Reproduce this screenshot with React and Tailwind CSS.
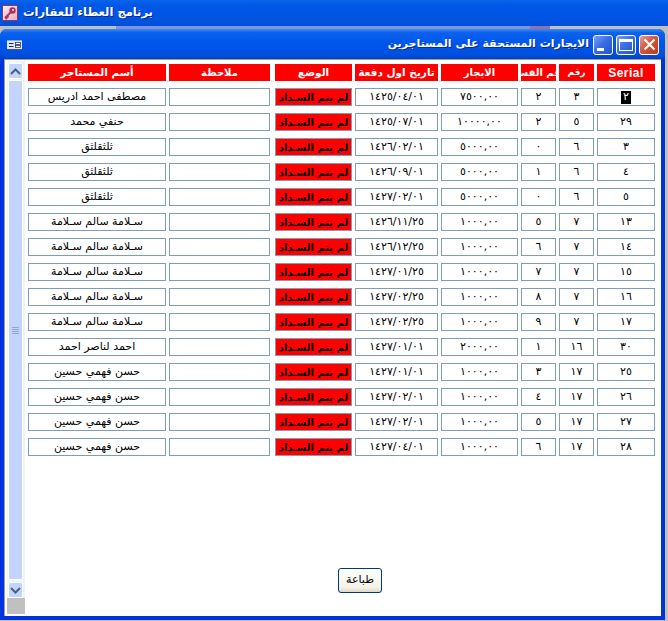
const FONT = "font-['Tahoma','DejaVu_Sans',sans-serif]";

const rows = [
  ["٢", "٣", "٢", "٧٥٠٠,٠٠", "١٤٢٥/٠٤/٠١", "مصطفى احمد ادريس"],
  ["٢٩", "٥", "٢", "١٠٠٠٠,٠٠", "١٤٢٥/٠٧/٠١", "حنفي محمد"],
  ["٣", "٦", "٠", "٥٠٠٠,٠٠", "١٤٢٦/٠٢/٠١", "ثلثقلثق"],
  ["٤", "٦", "١", "٥٠٠٠,٠٠", "١٤٢٦/٠٩/٠١", "ثلثقلثق"],
  ["٥", "٦", "٠", "٥٠٠٠,٠٠", "١٤٢٧/٠٢/٠١", "ثلثقلثق"],
  ["١٣", "٧", "٥", "١٠٠٠,٠٠", "١٤٢٦/١١/٢٥", "سـلامة سالم سـلامة"],
  ["١٤", "٧", "٦", "١٠٠٠,٠٠", "١٤٢٦/١٢/٢٥", "سـلامة سالم سـلامة"],
  ["١٥", "٧", "٧", "١٠٠٠,٠٠", "١٤٢٧/٠١/٢٥", "سـلامة سالم سـلامة"],
  ["١٦", "٧", "٨", "١٠٠٠,٠٠", "١٤٢٧/٠٢/٢٥", "سـلامة سالم سـلامة"],
  ["١٧", "٧", "٩", "١٠٠٠,٠٠", "١٤٢٧/٠٢/٢٥", "سـلامة سالم سـلامة"],
  ["٣٠", "١٦", "١", "٢٠٠٠,٠٠", "١٤٢٧/٠١/٠١", "احمد لناصر احمد"],
  ["٢٥", "١٧", "٣", "١٠٠٠,٠٠", "١٤٢٧/٠١/٠١", "حسن فهمي حسين"],
  ["٢٦", "١٧", "٤", "١٠٠٠,٠٠", "١٤٢٧/٠٢/٠١", "حسن فهمي حسين"],
  ["٢٧", "١٧", "٥", "١٠٠٠,٠٠", "١٤٢٧/٠٢/٠١", "حسن فهمي حسين"],
  ["٢٨", "١٧", "٦", "١٠٠٠,٠٠", "١٤٢٧/٠٤/٠١", "حسن فهمي حسين"],
];

const cellBase = "flex items-center justify-center overflow-hidden whitespace-nowrap";
const headBase = cellBase + " h-[17px] bg-[#ff0000] text-white font-bold";
const boxBase = cellBase + " h-[18px] border border-[#7f9db9] text-black";

function Header() {
  return (
    <div className="flex">
      <div className={headBase + " w-[138px] text-[10.5px]"}>أسم المستاجر</div>
      <div className={headBase + " w-[101px] ml-[3px] text-[10px]"}>ملاحظة</div>
      <div className={headBase + " w-[77px] ml-[5px] text-[10.5px]"}>الوضع</div>
      <div className={headBase + " w-[83px] ml-[3px] text-[10.5px]"}>تاريخ اول دفعة</div>
      <div className={headBase + " w-[77px] ml-[3px] text-[10px]"}>الايجار</div>
      <div className={headBase + " w-[35px] ml-[3px] text-[10px]"}>رقم القسم</div>
      <div className={headBase + " w-[35px] ml-[3px] text-[9px]"}>رقم</div>
      <div className={headBase + " w-[58px] ml-[3px] text-[12px] tracking-[0.5px] font-['Liberation_Sans',sans-serif]"}>Serial</div>
    </div>
  );
}

function Row({ r, first }) {
  return (
    <div className="flex items-start text-[11px]">
      <div className={boxBase + " w-[138px] bg-white"}>{r[5]}</div>
      <div className={boxBase + " w-[101px] ml-[3px] bg-white"}></div>
      <div className={boxBase + " w-[77px] ml-[5px] bg-[#ff0000] font-bold text-[10px]"}>لم يتم السـداد</div>
      <div className={boxBase + " w-[83px] ml-[3px] bg-white"}>{r[4]}</div>
      <div className={boxBase + " w-[77px] ml-[3px] bg-white"}>{r[3]}</div>
      <div className={boxBase + " w-[35px] ml-[3px] bg-white"}>{r[2]}</div>
      <div className={boxBase + " w-[35px] ml-[3px] bg-white"}>{r[1]}</div>
      <div className={boxBase + " w-[58px] ml-[3px] h-[17px] bg-white"}>
        {first ? (
          <span className="flex h-[13px] w-[10px] items-center justify-center bg-black text-white">{r[0]}</span>
        ) : (
          r[0]
        )}
      </div>
    </div>
  );
}

function WinBtn({ kind }) {
  const bg =
    kind === "close"
      ? "bg-[linear-gradient(135deg,#e8a08a,#d9553a_45%,#b83a1c)]"
      : "bg-[linear-gradient(135deg,#7d9ff0,#3a6ee6_45%,#2350d0)]";
  return (
    <div className={"flex h-[20px] w-[20px] items-center justify-center rounded-[3px] border border-white " + bg}>
      {kind === "close" && (
        <svg width="13" height="13" viewBox="0 0 13 13">
          <path d="M1.5 1.5L11.5 11.5M11.5 1.5L1.5 11.5" stroke="#fff" strokeWidth="2.2" />
        </svg>
      )}
      {kind === "max" && <div className="h-[12px] w-[14px] border border-t-[3px] border-white" />}
      {kind === "min" && <div className="mt-[10px] mr-[5px] h-[3px] w-[7px] bg-white" />}
    </div>
  );
}

function KeyIcon() {
  return (
    <div className="flex h-[16px] w-[16px] items-center justify-center border border-[#8a3a60] bg-[linear-gradient(135deg,#fbe8ee,#e8b0c0)]">
      <svg width="14" height="14" viewBox="0 0 14 14">
        <circle cx="9.5" cy="4.5" r="3.2" fill="#a8325f" />
        <path d="M7.5 6.5L2 12M2.5 11.5L4 13M4 10L5.5 11.5" stroke="#a8325f" strokeWidth="1.8" fill="none" />
        <circle cx="10" cy="4" r="1" fill="#f6d5df" />
      </svg>
    </div>
  );
}

function FormIcon() {
  return (
    <svg width="15" height="10" viewBox="0 0 15 10" className="mt-[2px]">
      <rect x="0" y="0" width="15" height="10" fill="#dfe4ee" />
      <rect x="0" y="0" width="15" height="1" fill="#8fa6d8" />
      <path d="M2 3.5H6.5M2 6.5H6.5" stroke="#1c2a50" strokeWidth="1" />
      <rect x="8.5" y="2.5" width="5" height="2" fill="#fff" stroke="#2a3a60" strokeWidth="0.8" />
      <rect x="8.5" y="5.5" width="5" height="2" fill="#fff" stroke="#2a3a60" strokeWidth="0.8" />
      <rect x="0" y="9" width="15" height="1" fill="#48566f" />
    </svg>
  );
}

function Chevron({ up }) {
  return (
    <svg width="11" height="7" viewBox="0 0 11 7">
      <path d={up ? "M1 6L5.5 1.5L10 6" : "M1 1L5.5 5.5L10 1"} stroke="#4d6185" strokeWidth="2" fill="none" />
    </svg>
  );
}

function Scrollbar() {
  const btn = "flex h-[16px] w-[15px] items-center justify-center rounded-[2px] border border-white bg-[#c3d4fd]";
  return (
    <div className="flex h-full w-[18px] shrink-0 flex-col bg-[#c0c0c0]">
      <div className="flex h-[537px] flex-col border-r-2 border-[#eef2fc] bg-[#f0f4fd] pl-[1px]">
        <div className="mt-[2px]">
          <div className={btn}><Chevron up /></div>
        </div>
        <div className="mt-[1px] flex h-[500px] w-[15px] items-center justify-center rounded-[2px] border border-white bg-[#c3d4fd]">
          <div className="flex w-[7px] flex-col gap-[1px]">
            <div className="h-[1px] bg-[#8ea6dc]" />
            <div className="h-[1px] bg-[#8ea6dc]" />
            <div className="h-[1px] bg-[#8ea6dc]" />
            <div className="h-[1px] bg-[#8ea6dc]" />
          </div>
        </div>
        <div className="mt-[2px]">
          <div className={btn}><Chevron /></div>
        </div>
      </div>
    </div>
  );
}

export default function App() {
  return (
    <div className={"flex h-[621px] w-[668px] flex-col overflow-hidden bg-[#c0c0c0] " + FONT} dir="ltr">
      {/* application title bar */}
      <div className="flex h-[26px] shrink-0 items-center gap-[5px] bg-[linear-gradient(180deg,#0a64ea_0%,#0058e6_20%,#0054e3_70%,#0050d8_100%)] pl-[2px]">
        <KeyIcon />
        <span className="text-[11.5px] font-bold text-white [text-shadow:1px_1px_0_#0a2a90]">برنامج العطاء للعقارات</span>
      </div>
      {/* sliver of the window behind */}
      <div className="flex h-[3px] shrink-0">
        <div className="w-[116px] bg-[#c0c0c0]" />
        <div className="w-[414px] bg-[#7f94dc]" />
        <div className="w-[20px] bg-[#9a6fa8]" />
        <div className="flex-1 bg-[#c0c0c0]" />
      </div>
      {/* child window */}
      <div className="flex w-[665px] flex-1 flex-col overflow-hidden rounded-t-[7px] bg-[#0033dd]">
        <div className="flex h-[30px] shrink-0 items-center justify-between bg-[linear-gradient(180deg,#3c8cf2_0%,#0a62ee_12%,#0055ea_50%,#0050e0_85%,#0042c8_100%)] pl-[7px] pr-[6px]">
          <FormIcon />
          <div className="mt-[1px] flex items-center gap-[3px]">
            <span className="mr-[1px] text-[11px] font-bold text-white [text-shadow:1px_1px_0_#0a2a90]">الايجارات المستحقة على المستاجرين</span>
            <WinBtn kind="min" />
            <WinBtn kind="max" />
            <WinBtn kind="close" />
          </div>
        </div>
        <div className="flex flex-1 px-[4px] pb-[4px]">
          <div className="flex flex-1 border-l border-t border-[#9c9c9c] bg-white pb-[2px] pl-[2px] pt-[1px]">
            <Scrollbar />
            <div className="flex flex-1 flex-col pl-[3px] pt-[3px]">
              <Header />
              <div className="mt-[7px] flex flex-col gap-[7px]">
                {rows.map((r, i) => (
                  <Row key={i} r={r} first={i === 0} />
                ))}
              </div>
              <div className="mt-[112px] pl-[310px]">
                <button className="flex h-[25px] w-[44px] items-center justify-center rounded-[3px] border border-[#003c74] bg-[linear-gradient(180deg,#ffffff,#f4f2e8_80%,#dcd8c8)] text-[11px] text-black">
                  طباعة
                </button>
              </div>
            </div>
          </div>
        </div>
      </div>
      <div className="h-[1px] shrink-0 bg-[#c0c0c0]" />
    </div>
  );
}
